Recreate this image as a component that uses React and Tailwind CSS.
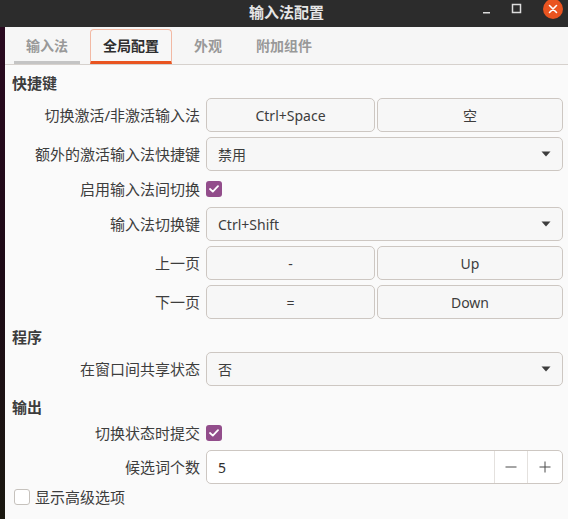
import React from "react";

const font = {
  fontFamily: '"Noto Sans", "Noto Sans CJK SC", sans-serif',
};

const btnClass =
  "h-[34px] flex items-center justify-center rounded-[5px] border border-[#cdc7c2] bg-[#f7f7f7] text-[14px] text-[#3d3d3d]";

const Checkbox = ({ checked }) =>
  checked ? (
    <div className="w-[16px] h-[16px] rounded-[3px] bg-[#924d8b] flex items-center justify-center">
      <svg width="10" height="8" viewBox="0 0 10 8" fill="none">
        <path d="M1 4 L3.8 6.6 L9 1.2" stroke="#fff" strokeWidth="1.8" strokeLinecap="round" strokeLinejoin="round" />
      </svg>
    </div>
  ) : (
    <div className="w-[16px] h-[16px] rounded-[3px] border border-[#c6c2bd] bg-white" />
  );

const Label = ({ children }) => (
  <div className="w-[195px] shrink-0 text-right text-[15px] text-[#3d3d3d]">{children}</div>
);

const Row = ({ label, children, className = "" }) => (
  <div className={"flex items-center gap-[6px] pr-[5px] " + className}>
    <Label>{label}</Label>
    <div className="flex-1 flex gap-[2px]">{children}</div>
  </div>
);

const Combo = ({ value }) => (
  <div className="flex-1 h-[34px] flex items-center justify-between rounded-[5px] border border-[#cdc7c2] bg-[#f7f7f7] pl-[11px] pr-[11px] text-[14px] text-[#3d3d3d]">
    <span>{value}</span>
    <svg width="10" height="6" viewBox="0 0 10 6">
      <path d="M0.5 0.5 H9.5 L5 5.5 Z" fill="#3d3d3d" />
    </svg>
  </div>
);

const Heading = ({ children, className = "" }) => (
  <div className={"h-[26px] flex items-center pl-[7px] text-[15px] font-bold text-[#3d3d3d] " + className}>
    {children}
  </div>
);

const tabClass = "h-[35px] px-[12px] flex items-center text-[14px] font-bold";

export default function App() {
  return (
    <div className="w-[568px] h-[519px] flex overflow-hidden bg-[#2c2c2c]" style={font}>
      <div className="w-[5px] shrink-0 flex flex-col">
        <div className="h-[27px] bg-[#2c2c2c]" />
        <div className="flex-1 bg-gradient-to-b from-[#2a0a20] via-[#1d0a16] to-[#1a1810]" />
      </div>
      <div className="flex-1 flex flex-col">
        {/* title bar */}
        <div className="h-[27px] shrink-0 bg-[#2c2c2c] relative flex items-start justify-center">
          <div className="pt-[1px] text-[15px] font-bold text-[#e6e6e6]">输入法配置</div>
          <div className="absolute right-[5px] top-0 flex items-center">
            <svg width="10" height="18" viewBox="0 0 10 18" className="mr-[19px]">
              <rect x="1" y="11" width="7" height="1.5" fill="#dcdcdc" />
            </svg>
            <svg width="12" height="18" viewBox="0 0 12 18" className="mr-[20px]">
              <rect x="1.5" y="3.5" width="8" height="8" fill="none" stroke="#dcdcdc" strokeWidth="1.5" />
            </svg>
            <svg width="20" height="20" viewBox="0 0 20 20" className="mt-[-1px]">
              <circle cx="10" cy="10" r="10" fill="#e95420" />
              <path d="M6.5 6.5 L13.5 13.5 M13.5 6.5 L6.5 13.5" stroke="#fff" strokeWidth="1.6" strokeLinecap="round" />
            </svg>
          </div>
        </div>

        {/* tabs */}
        <div className="h-[38px] shrink-0 bg-[#f6f6f6] border-b border-[#d6d1cd] flex items-end gap-[10px] pl-[9px]">
          <div className={tabClass + " text-[#999] border-b-[3px] border-[#c4c4c4]"}>输入法</div>
          <div className={tabClass + " text-[#2e2e2e] border border-[#f2b9a4] border-b-[3px] border-b-[#e95420] rounded-t-[4px] bg-[#f7f7f7]"}>
            全局配置
          </div>
          <div className={tabClass + " text-[#999] border-b-[3px] border-transparent"}>外观</div>
          <div className={tabClass + " text-[#999] border-b-[3px] border-transparent"}>附加组件</div>
        </div>

        {/* content */}
        <div className="flex-1 bg-[#fafafa] flex flex-col pt-[5px]">
          <Heading>快捷键</Heading>
          <Row label="切换激活/非激活输入法" className="mt-[2px]">
            <div className={btnClass + " w-[169px]"}>Ctrl+Space</div>
            <div className={btnClass + " flex-1"}>空</div>
          </Row>
          <Row label="额外的激活输入法快捷键" className="mt-[5px]">
            <Combo value="禁用" />
          </Row>
          <Row label="启用输入法间切换" className="mt-[5px] h-[26px]">
            <Checkbox checked />
          </Row>
          <Row label="输入法切换键" className="mt-[5px]">
            <Combo value="Ctrl+Shift" />
          </Row>
          <Row label="上一页" className="mt-[5px]">
            <div className={btnClass + " w-[169px]"}>-</div>
            <div className={btnClass + " flex-1"}>Up</div>
          </Row>
          <Row label="下一页" className="mt-[5px]">
            <div className={btnClass + " w-[169px]"}>=</div>
            <div className={btnClass + " flex-1"}>Down</div>
          </Row>

          <Heading className="mt-[5px]">程序</Heading>
          <Row label="在窗口间共享状态" className="mt-[2px]">
            <Combo value="否" />
          </Row>

          <Heading className="mt-[8px]">输出</Heading>
          <Row label="切换状态时提交" className="h-[26px]">
            <Checkbox checked />
          </Row>
          <Row label="候选词个数" className="mt-[4px]">
            <div className="flex-1 h-[34px] flex items-stretch rounded-[5px] border border-[#cdc7c2] bg-white text-[14px] text-[#2e2e2e]">
              <div className="flex-1 flex items-center pl-[11px]">5</div>
              <div className="w-[33px] border-l border-[#e4e1de] flex items-center justify-center">
                <svg width="12" height="12" viewBox="0 0 12 12">
                  <path d="M0.5 6 H11.5" stroke="#4a4a4a" strokeWidth="1" />
                </svg>
              </div>
              <div className="w-[35px] border-l border-[#e4e1de] flex items-center justify-center">
                <svg width="12" height="12" viewBox="0 0 12 12">
                  <path d="M0.5 6 H11.5 M6 0.5 V11.5" stroke="#4a4a4a" strokeWidth="1" />
                </svg>
              </div>
            </div>
          </Row>
          <div className="h-[26px] flex items-center gap-[5px] pl-[9px]">
            <Checkbox />
            <span className="text-[15px] text-[#3d3d3d]">显示高级选项</span>
          </div>
        </div>
      </div>
    </div>
  );
}
